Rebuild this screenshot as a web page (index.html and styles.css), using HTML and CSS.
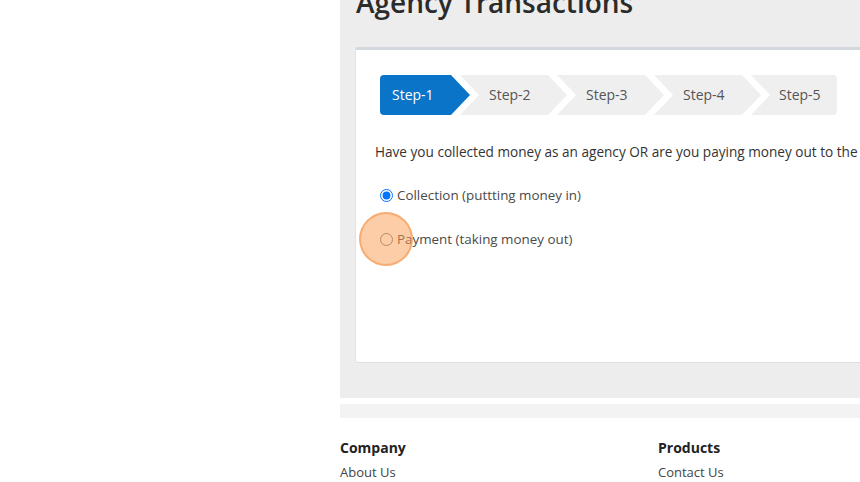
FILE: index.html
```html
<!DOCTYPE html>
<html lang="en">
<head>
<meta charset="utf-8">
<title>Agency Transactions</title>
<link rel="stylesheet" href="styles.css">
</head>
<body>
<div class="page">
  <section class="main">
    <h1 class="title">Agency Transactions</h1>
    <div class="card">
      <div class="steps">
        <div class="step step-first active">Step-1</div>
        <div class="step step-mid">Step-2</div>
        <div class="step step-mid">Step-3</div>
        <div class="step step-mid">Step-4</div>
        <div class="step step-last">Step-5</div>
      </div>
      <p class="question">Have you collected money as an agency OR are you paying money out to the third party?</p>
      <label class="option"><input type="radio" name="kind" checked> Collection (puttting money in)</label>
      <label class="option option-second"><span class="radio-wrap"><input type="radio" name="kind"><span class="click-marker"></span></span> Payment (taking money out)</label>
    </div>
  </section>
  <div class="band"></div>
  <footer class="footer">
    <div class="col">
      <h4 class="col-head">Company</h4>
      <a class="col-link">About Us</a>
    </div>
    <div class="col">
      <h4 class="col-head">Products</h4>
      <a class="col-link">Contact Us</a>
    </div>
  </footer>
</div>
</body>
</html>
```

FILE: styles.css
```css
html, body {
  margin: 0;
  padding: 0;
  background: #ffffff;
  overflow: hidden;
}
body {
  font-family: "Open Sans", "Noto Sans", sans-serif;
  color: #333333;
}
.page {
  margin-left: 340px;
  width: 900px;
}
.main {
  background: #eeeded;
  padding: 0 0 35px 0;
}
.title {
  margin: -14px 0 0 16px;
  font-size: 28px;
  line-height: 32px;
  font-weight: 600;
  color: #2b2b2b;
}
.card {
  margin: 29px 0 0 15px;
  background: #ffffff;
  border-top: 3px solid #d3d8df;
  border-left: 1px solid #e2e2e2;
  border-bottom: 1px solid #dddddd;
  border-radius: 3px;
  padding: 25px 20px 0 19px;
  height: 287px;
  box-sizing: content-box;
}
.steps {
  display: flex;
  margin-left: 5px;
  height: 40px;
}
.step {
  height: 40px;
  line-height: 40px;
  font-size: 14px;
  background: #efefef;
  color: #555555;
  box-sizing: border-box;
  flex: none;
}
.step.active {
  background: #0a74c9;
  color: #ffffff;
}
.step-first {
  width: 90px;
  padding-left: 12px;
  border-radius: 4px 0 0 4px;
  clip-path: polygon(0 0, 71px 0, 90px 50%, 71px 100%, 0 100%);
}
.step-mid {
  width: 107px;
  margin-left: -10px;
  padding-left: 29px;
  clip-path: polygon(0 0, 88px 0, 107px 50%, 88px 100%, 0 100%, 19px 50%);
}
.step-last {
  width: 86px;
  margin-left: -10px;
  padding-left: 28px;
  border-radius: 0 4px 4px 0;
  clip-path: polygon(0 0, 100% 0, 100% 100%, 0 100%, 19px 50%);
}
.question {
  margin: 27px 0 0 0;
  font-size: 13.6px;
  line-height: 20px;
  white-space: nowrap;
  color: #333333;
}
.option {
  display: flex;
  align-items: center;
  font-size: 13.4px;
  line-height: 20px;
  color: #4a4a4a;
  margin-top: 23px;
}
.option input {
  margin: 0 4px 0 5px;
  width: 13px;
  height: 13px;
}
.option-second {
  margin-top: 24px;
}
.radio-wrap {
  position: relative;
  display: inline-flex;
}
.click-marker {
  position: absolute;
  left: -16px;
  top: -21px;
  width: 50px;
  height: 50px;
  border-radius: 50%;
  background: rgba(250, 155, 80, 0.5);
  border: 2px solid rgba(245, 160, 95, 0.75);
  pointer-events: none;
}
.band {
  margin-top: 6px;
  height: 14px;
  background: #f3f3f4;
}
.footer {
  display: flex;
  padding-top: 20px;
}
.col {
  width: 318px;
}
.col-head {
  margin: 0;
  font-size: 14px;
  line-height: 20px;
  font-weight: 700;
  color: #222222;
}
.col-link {
  display: block;
  margin-top: 4px;
  font-size: 13px;
  line-height: 20px;
  color: #444444;
}
```
